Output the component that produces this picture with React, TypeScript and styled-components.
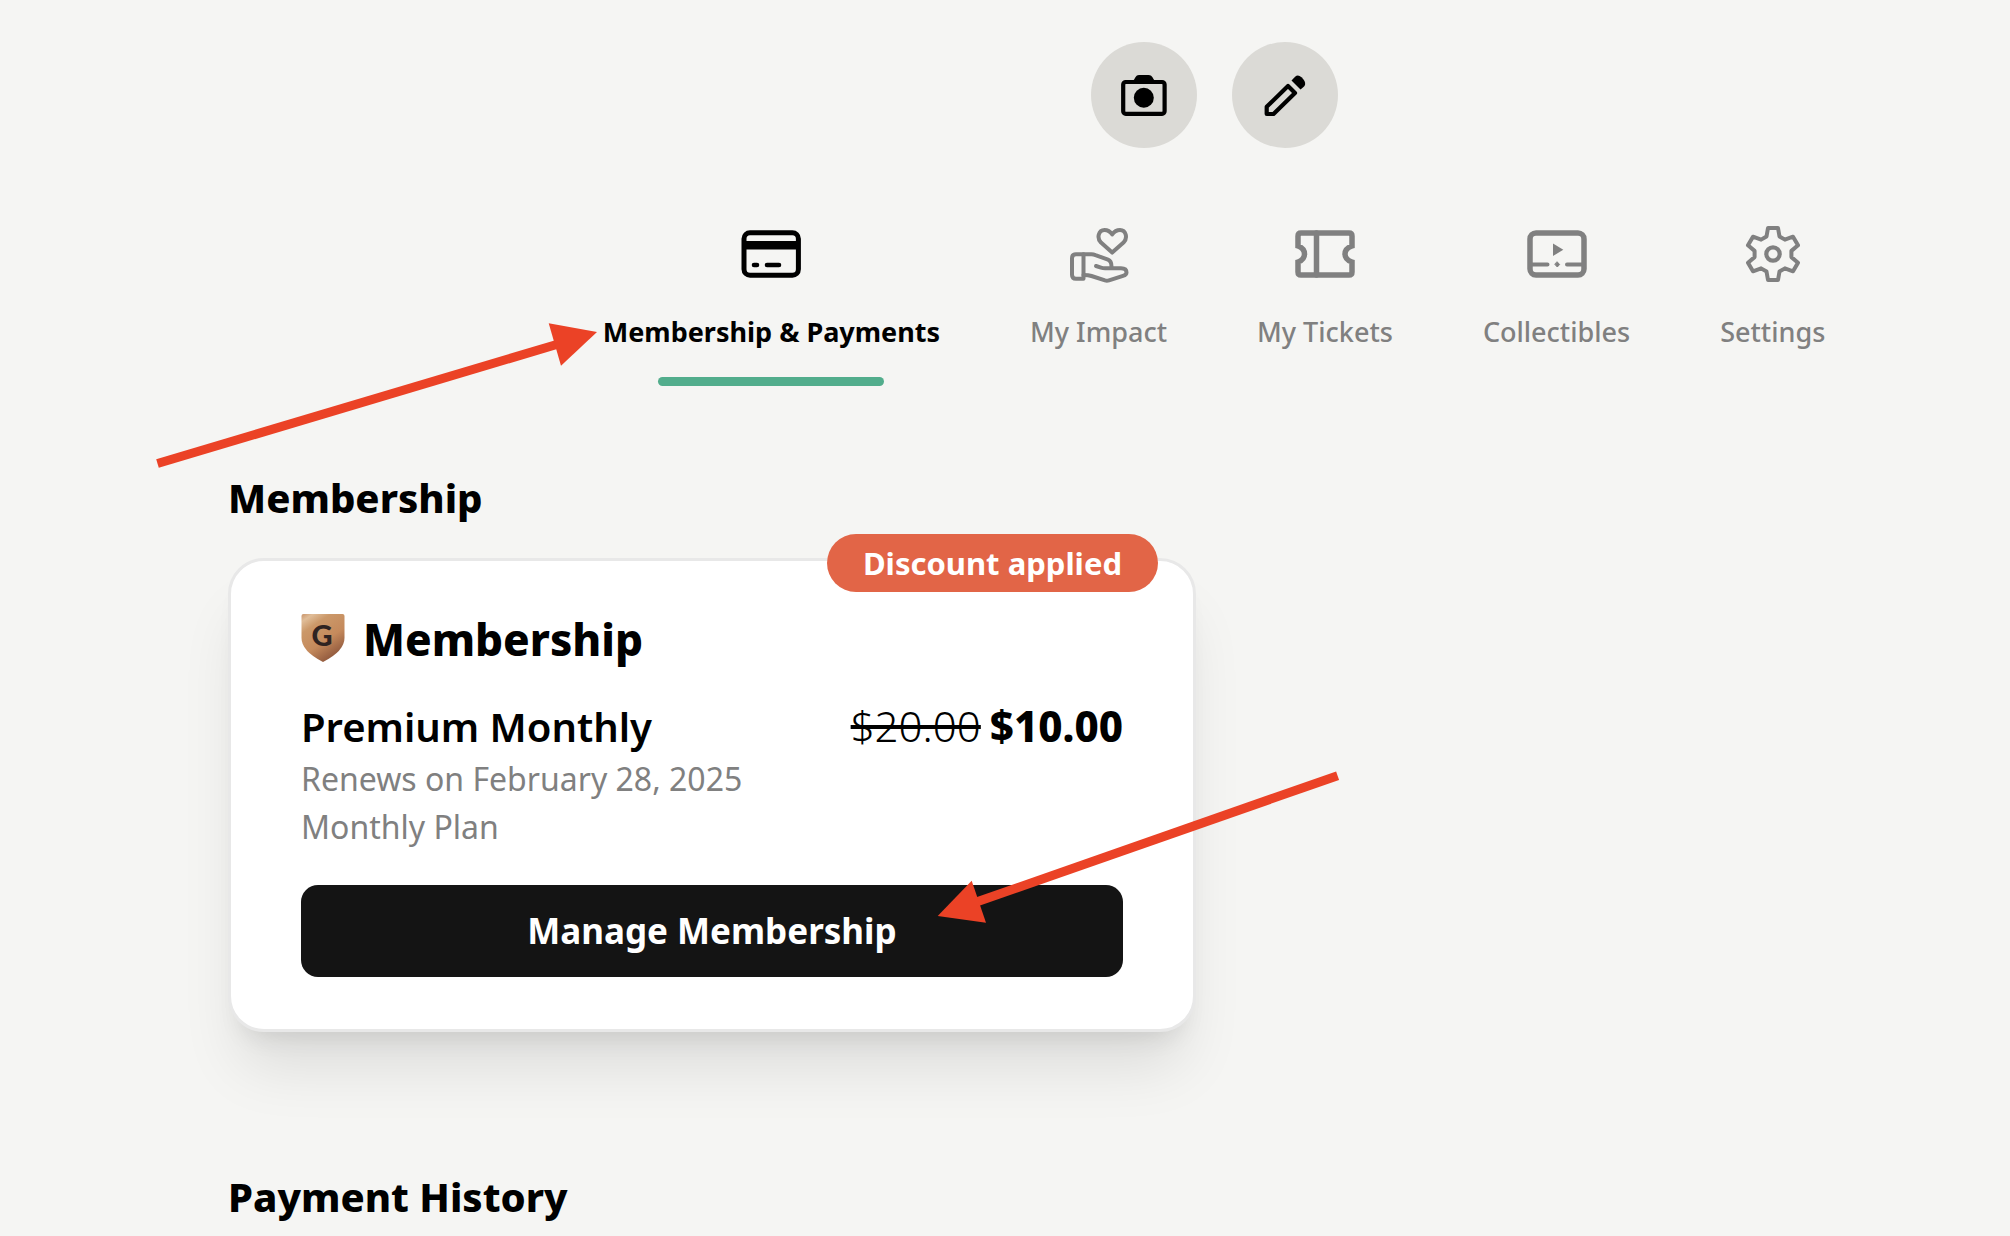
import React from 'react';
import styled, { createGlobalStyle } from 'styled-components';

const GlobalStyle = createGlobalStyle`
  *, *::before, *::after { box-sizing: border-box; }
  body {
    margin: 0;
    background: #f5f5f3;
    color: #000;
    font-family: "Noto Sans", "Open Sans", sans-serif;
  }
  h1, h2, h3, p { margin: 0; }
  button { font: inherit; border: 0; cursor: pointer; }
`;

const Page = styled.main`
  position: relative;
  min-height: 100vh;
  padding-top: 42px;
  overflow: hidden;
`;

const Header = styled.header`
  display: flex;
  flex-direction: column;
  align-items: center;
  gap: 76px;
  padding-left: 418px;
`;

const Actions = styled.div`
  display: flex;
  gap: 35px;
`;

const RoundButton = styled.button`
  display: grid;
  place-items: center;
  width: 106px;
  height: 106px;
  padding: 0;
  border-radius: 50%;
  background: #dbdad6;
  color: #000;
`;

const Tabs = styled.nav`
  display: flex;
  align-items: flex-start;
  gap: 90px;
`;

const Tab = styled.a<{ $active?: boolean }>`
  display: flex;
  flex-direction: column;
  align-items: center;
  color: ${(p) => (p.$active ? '#000' : '#808080')};
  font-size: 27px;
  font-weight: ${(p) => (p.$active ? 700 : 500)};
  line-height: 36px;
  text-decoration: none;
  white-space: nowrap;

  svg { margin-bottom: 30px; }

  &::after {
    content: '';
    width: 67%;
    height: 9px;
    margin-top: 27px;
    border-radius: 5px;
    background: ${(p) => (p.$active ? '#52ad8c' : 'transparent')};
  }
`;

const Content = styled.div`
  display: flex;
  flex-direction: column;
  padding: 86px 40px 0 228px;
`;

const SectionTitle = styled.h2`
  font-size: 40px;
  font-weight: 800;
  line-height: 52px;
`;

const Card = styled.section`
  position: relative;
  width: 968px;
  max-width: 100%;
  margin: 34px 0 139px;
  padding: 42px 70px 52px;
  border: 3px solid #e8e8e8;
  border-radius: 36px;
  background: #fff;
  box-shadow: 0 46px 60px -12px rgba(0, 0, 0, 0.1), 0 18px 24px -14px rgba(0, 0, 0, 0.1);
`;

const Badge = styled.span`
  position: absolute;
  top: -27px;
  right: 35px;
  padding: 0 36px;
  border-radius: 29px;
  background: #e26547;
  color: #fff;
  font-size: 31px;
  font-weight: 700;
  line-height: 58px;
`;

const CardHeading = styled.div`
  display: flex;
  align-items: center;
  gap: 18px;
`;

const CardTitle = styled.h3`
  font-size: 44px;
  font-weight: 800;
  line-height: 72px;
`;

const PlanRow = styled.div`
  display: flex;
  justify-content: space-between;
  align-items: baseline;
  margin-top: 23px;
  font-size: 40px;
  line-height: 56px;
`;

const PlanName = styled.span`
  font-weight: 600;
`;

const Price = styled.span`
  display: flex;
  gap: 9px;
  font-size: 42px;
  font-weight: 800;
`;

const OldPrice = styled.s`
  font-weight: 300;
  text-decoration-thickness: 4px;
`;

const Detail = styled.p`
  color: #808080;
  font-size: 32px;
  font-weight: 400;
  line-height: 48px;
`;

const ManageButton = styled.button`
  width: 100%;
  height: 92px;
  margin-top: 34px;
  padding: 0 0 2px;
  border-radius: 17px;
  background: #141414;
  color: #fff;
  font-size: 35px;
  font-weight: 700;
`;

const Annotations = styled.svg`
  position: absolute;
  top: 0;
  left: 0;
  pointer-events: none;
`;

type IconProps = { size?: number; children: React.ReactNode };

const Icon = ({ size = 60, children }: IconProps) => (
  <svg
    width={size}
    height={size}
    viewBox={`0 0 ${size} ${size}`}
    fill="none"
    stroke="currentColor"
    strokeLinecap="round"
    strokeLinejoin="round"
    aria-hidden="true"
  >
    {children}
  </svg>
);

const CameraIcon = () => (
  <Icon size={48}>
    <rect x="3.2" y="11" width="41.4" height="31.8" rx="2.5" strokeWidth="4.2" />
    <path d="M12 11C15 9 15 4 19 4h9.500C33 4 33 9 36 11z" fill="currentColor" stroke="none" />
    <circle cx="23.800" cy="26.700" r="10" fill="currentColor" stroke="none" />
  </Icon>
);

const PencilIcon = () => (
  <Icon size={48}>
    <path d="M27 15l7 7L12.500 43H5.700V35.800z" strokeWidth="4.200" />
    <path d="M30.500 9.500l3.600-3.800q3-2.600 6.400.6 4.200 4 3.600 7.200-.4 1.500-1.600 2.600L39.500 18.500z" fill="currentColor" stroke="none" />
  </Icon>
);

const CardIcon = () => (
  <Icon>
    <rect x="3" y="8.800" width="54.400" height="42.400" rx="6" strokeWidth="5" />
    <path d="M3 21.200h54" strokeWidth="8.600" strokeLinecap="butt" />
    <path d="M13 41h3M26 41h12" strokeWidth="4.600" />
  </Icon>
);

const ImpactIcon = () => (
  <Icon>
    <g strokeWidth="4">
      <path d="M14.500 30.300H7q-4 0-4 4v16.400q0 4 4 4h7.500z" />
      <path d="M14.500 30.300h8q2 0 4 .8l12.500 4.600q3.500 1.400 3.500 6.800" />
      <path d="M27 42l5 1.600q2 .6 4 .6h16q5.500 0 5.500 4.200 0 2.400-3.500 3.400L40 56.300q-2 .7-4 .1L22.500 52q-3-1-8-1" />
      <path d="M43.200 28.600L32 18.600C27.500 14 29.500 6 35.500 6q4.700 0 7.700 4.500Q46.200 6 51 6c6 0 8 8 3.500 12.600z" />
    </g>
  </Icon>
);

const TicketIcon = () => (
  <Icon>
    <path
      d="M6 9h48q3 0 3 3v10q-7 2.400-7 8t7 8v10q0 3-3 3H6q-3 0-3-3V38q6.500-2.400 6.500-8T3 22V12q0-3 3-3z"
      strokeWidth="5.500"
      strokeLinejoin="miter"
    />
    <path d="M21.500 9v42" strokeWidth="5.500" />
  </Icon>
);

const CollectiblesIcon = () => (
  <Icon>
    <rect x="3" y="9" width="54" height="42" rx="6" strokeWidth="5.500" />
    <path d="M26 19.500v12.400l10.300-6.200z" fill="currentColor" stroke="none" />
    <path d="M5 40.500h15.500M40 40.500h15" strokeWidth="4" />
    <path d="M30.300 38l2.300 2.500-2.300 2.500-2.300-2.500z" fill="currentColor" strokeWidth="1" />
  </Icon>
);

const toothProfile = [
  [-6.5, -17.5],
  [-5, -26],
  [5, -26],
  [6.5, -17.5],
];

const gearPoints = Array.from({ length: 6 }, (_, i) => (i * Math.PI) / 3)
  .flatMap((angle) =>
    toothProfile.map(([x, y]) => {
      const px = 30 + x * Math.cos(angle) - y * Math.sin(angle);
      const py = 30 + x * Math.sin(angle) + y * Math.cos(angle);
      return `${px.toFixed(2)},${py.toFixed(2)}`;
    }),
  )
  .join(' ');

const GearIcon = () => (
  <Icon>
    <polygon points={gearPoints} strokeWidth="4" />
    <circle cx="30" cy="30" r="6.700" strokeWidth="4.200" />
  </Icon>
);

const ShieldIcon = () => (
  <svg width="44" height="50" viewBox="0 0 44 50" aria-hidden="true">
    <defs>
      <linearGradient id="bronze" x1="0" y1="0" x2="0.6" y2="1">
        <stop offset="0" stopColor="#c9946a" />
        <stop offset="0.12" stopColor="#e0bd98" />
        <stop offset="0.3" stopColor="#cb9869" />
        <stop offset="0.65" stopColor="#c58a5c" />
        <stop offset="1" stopColor="#8f573c" />
      </linearGradient>
    </defs>
    <path d="M2.500 0h39q2 0 2 2v22q0 13-21.500 24Q.5 37 .5 24V2q0-2 2-2z" fill="url(#bronze)" />
    <text x="21" y="32" textAnchor="middle" fontFamily="Lato, sans-serif" fontSize="29" fontWeight="900" fill="#2f2321">
      G
    </text>
  </svg>
);

const tabs = [
  { label: 'Membership & Payments', icon: <CardIcon />, active: true },
  { label: 'My Impact', icon: <ImpactIcon /> },
  { label: 'My Tickets', icon: <TicketIcon /> },
  { label: 'Collectibles', icon: <CollectiblesIcon /> },
  { label: 'Settings', icon: <GearIcon /> },
];

export default function App() {
  return (
    <>
      <GlobalStyle />
      <Page>
        <Header>
          <Actions>
            <RoundButton type="button" aria-label="Change photo">
              <CameraIcon />
            </RoundButton>
            <RoundButton type="button" aria-label="Edit profile">
              <PencilIcon />
            </RoundButton>
          </Actions>
          <Tabs aria-label="Account">
            {tabs.map((tab) => (
              <Tab key={tab.label} href="#" $active={tab.active} aria-current={tab.active ? 'page' : undefined}>
                {tab.icon}
                {tab.label}
              </Tab>
            ))}
          </Tabs>
        </Header>
        <Content>
          <SectionTitle>Membership</SectionTitle>
          <Card>
            <Badge>Discount applied</Badge>
            <CardHeading>
              <ShieldIcon />
              <CardTitle>Membership</CardTitle>
            </CardHeading>
            <PlanRow>
              <PlanName>Premium Monthly</PlanName>
              <Price>
                <OldPrice>$20.00</OldPrice>
                <span>$10.00</span>
              </Price>
            </PlanRow>
            <Detail>Renews on February 28, 2025</Detail>
            <Detail>Monthly Plan</Detail>
            <ManageButton type="button">Manage Membership</ManageButton>
          </Card>
          <SectionTitle>Payment History</SectionTitle>
        </Content>
        <Annotations width="1400" height="960" viewBox="0 0 1400 960" fill="#eb4226" stroke="#eb4226" aria-hidden="true">
          <path d="M157.500 463.500L560 343.500" strokeWidth="9" />
          <path d="M597 332L548.700 323.300L561 365.700z" stroke="none" />
          <path d="M1337.600 775.700L975 902.500" strokeWidth="9" />
          <path d="M937.700 916L971.700 880.700L986 922.700z" stroke="none" />
        </Annotations>
      </Page>
    </>
  );
}
